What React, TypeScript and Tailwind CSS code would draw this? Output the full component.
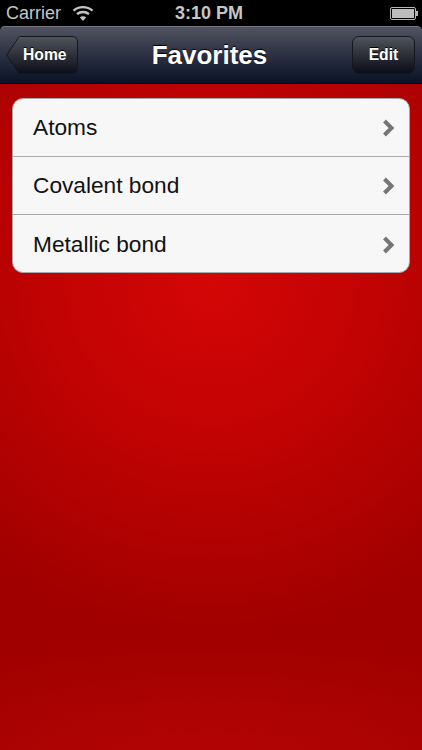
const items = ['Atoms', 'Covalent bond', 'Metallic bond'];

function Wifi() {
  return (
    <svg width="22" height="16" viewBox="0 0 22 16" fill="none" stroke="#c4c4c4" strokeWidth="2.4">
      <path d="M1.500 5.600C6.800 .9 15.200 .9 20.500 5.600" />
      <path d="M5 9.200c3.400-2.900 8.600-2.900 12 0" />
      <path d="M11 16l-3.200-3.800c1.800-1.200 4.600-1.200 6.400 0z" fill="#c4c4c4" stroke="none" />
    </svg>
  );
}

function Battery() {
  return (
    <div className="flex items-center">
      <div className="w-[26px] h-[13px] border border-[#b5b5b5] rounded-[2px] p-[1px]">
        <div className="w-full h-full bg-[#bdbdbd]" />
      </div>
      <div className="w-[2px] h-[5px] bg-[#b5b5b5]" />
    </div>
  );
}

function Chevron() {
  return (
    <svg width="13" height="18" viewBox="0 0 13 18" fill="none" stroke="#757575" strokeWidth="4">
      <path d="M2.500 2L9.500 9L2.500 16" />
    </svg>
  );
}

export default function App() {
  return (
    <div className="w-[422px] h-[750px] flex flex-col overflow-hidden font-['Liberation_Sans',Arial,sans-serif]">
      {/* Status bar */}
      <div className="h-[26px] bg-black flex items-center justify-between pl-[6px] pr-[4px] text-[#c6c6c6] text-[18px] relative">
        <div className="flex items-center gap-[11px]">
          <span>Carrier</span>
          <Wifi />
        </div>
        <span className="absolute left-[175px] font-bold text-[#c6c6c6]">3:10 PM</span>
        <Battery />
      </div>

      {/* Nav bar */}
      <div className="h-[58px] bg-black">
        <div className="h-full rounded-t-[5px] border-t border-b border-t-[#74767f] border-b-[#04060e] bg-gradient-to-b from-[#51535f] to-[#0a1227] flex items-center justify-between pl-[6px] pr-[7px]">
          <div className="relative w-[72px] h-[38px] flex items-center">
            <svg className="absolute inset-0" width="72" height="38" viewBox="0 0 72 38">
              <defs>
                <linearGradient id="btn" x1="0" y1="0" x2="0" y2="1">
                  <stop offset="0" stopColor="#52545c" />
                  <stop offset="1" stopColor="#0b0e18" />
                </linearGradient>
              </defs>
              <path
                d="M.8 19L12.500 1.500q.7-1 2-1H66q5.500 0 5.500 5.500v26q0 5.500-5.500 5.500H14.500q-1.300 0-2-1z"
                fill="url(#btn)"
                stroke="#14171f"
              />
            </svg>
            <span className="relative ml-[17px] text-white text-[15.7px] font-bold [text-shadow:0_-1px_0_#000]">Home</span>
          </div>
          <span className="mr-[11px] text-white text-[26px] font-bold [text-shadow:0_-1px_1px_#000]">Favorites</span>
          <div className="w-[63px] h-[38px] rounded-[7px] border border-[#14171f] bg-gradient-to-b from-[#52545c] to-[#0b0e18] flex items-center justify-center text-white text-[15.7px] font-bold [text-shadow:0_-1px_0_#000]">
            Edit
          </div>
        </div>
      </div>

      {/* Content */}
      <div className="flex-1 px-[12px] pt-[14px] bg-[radial-gradient(ellipse_420px_130px_at_211px_676px,#b40404_0%,rgba(170,0,0,0)_100%),radial-gradient(circle_360px_at_211px_196px,#d40606_0%,#c40303_40%,#a00000_100%)]">
        <div className="rounded-[11px] border border-[#a8a8a8] bg-[#f7f7f7] overflow-hidden">
          {items.map((item, i) => (
            <div
              key={item}
              className={`flex items-center justify-between pl-[20px] pr-[14px] ${i < 2 ? 'h-[58px] border-b border-[#a9a9a9]' : 'h-[57px] pt-[2px]'}`}
            >
              <span className="text-[22.7px] text-[#111]">{item}</span>
              <Chevron />
            </div>
          ))}
        </div>
      </div>
    </div>
  );
}
